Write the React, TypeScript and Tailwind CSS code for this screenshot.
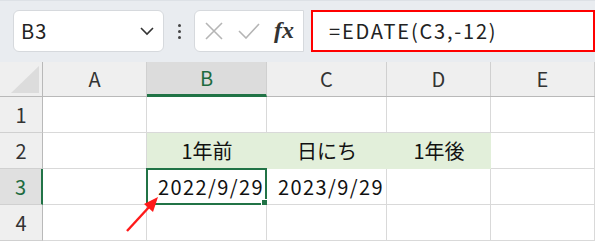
const cols = [
  { id: 'A', w: 'w-[104px]' },
  { id: 'B', w: 'w-[120px]' },
  { id: 'C', w: 'w-[120px]' },
  { id: 'D', w: 'w-[104px]' },
  { id: 'E', w: 'w-[104px]' },
];

const rows: { n: number; cells: string[]; fill?: boolean }[] = [
  { n: 1, cells: ['', '', '', '', ''] },
  { n: 2, cells: ['', '1年前', '日にち', '1年後', ''], fill: true },
  { n: 3, cells: ['', '2022/9/29', '2023/9/29', '', ''] },
  { n: 4, cells: ['', '', '', '', ''] },
];

export default function App() {
  return (
    <div
      className="w-[595px] h-[242px] bg-white overflow-hidden relative text-[#222]"
      style={{ fontFamily: '"Noto Sans CJK JP", "Noto Sans", sans-serif' }}
    >
      {/* 수식 입력줄 */}
      <div className="h-[62px] bg-[#e9ecf0] border-t border-[#dde1e6] flex items-start pt-[9px] pl-[13px]">
        <div className="w-[151px] h-[42px] bg-white border border-[#d6d9dd] rounded-[6px] flex items-center pl-[7px] pr-[8px]">
          <span className="text-[20px] leading-none flex-1 tracking-[1px]">B3</span>
          <svg width="16" height="10" viewBox="0 0 16 10" fill="none" stroke="#333" strokeWidth="1.6">
            <path d="M2 2 L8 8 L14 2" />
          </svg>
        </div>
        <div className="w-[30px] h-[42px] flex flex-col items-center justify-center gap-[3px]">
          <span className="w-[3px] h-[3px] bg-[#444] rounded-full" />
          <span className="w-[3px] h-[3px] bg-[#444] rounded-full" />
          <span className="w-[3px] h-[3px] bg-[#444] rounded-full" />
        </div>
        <div className="w-[110px] h-[42px] bg-white border border-[#d6d9dd] rounded-l-[6px] flex items-center pl-[9px] gap-[14px]">
          <svg width="20" height="20" viewBox="0 0 20 20" fill="none" stroke="#b5b5b5" strokeWidth="1.6">
            <path d="M2 2 L18 18 M18 2 L2 18" />
          </svg>
          <svg width="22" height="16" viewBox="0 0 22 16" fill="none" stroke="#b5b5b5" strokeWidth="1.6">
            <path d="M1 8 L8 15 L21 1" />
          </svg>
          <span
            className="text-[24px] italic font-bold text-[#333] leading-none -mt-[2px]"
            style={{ fontFamily: '"Liberation Serif", serif' }}
          >
            fx
          </span>
        </div>
        <div className="ml-[7px] w-[284px] h-[42px] bg-white border-2 border-[#ff0000] flex items-center pl-[16px]">
          <span className="text-[20px] leading-none tracking-[1.8px]">=EDATE(C3,-12)</span>
        </div>
      </div>

      {/* 시트 */}
      <div className="flex flex-col">
        <div className="flex h-[35px] bg-[#efefef] border-b border-[#b9b9b9]">
          <div className="w-[43px] border-r border-[#b9b9b9] flex items-end justify-end pr-[3px] pb-[3px]">
            <svg width="28" height="27" viewBox="0 0 28 27">
              <polygon points="28,0 28,27 0,27" fill="#dcdcdc" />
            </svg>
          </div>
          {cols.map((c) =>
            c.id === 'B' ? (
              <div
                key={c.id}
                className={`${c.w} bg-[#dcdcdc] border-r border-[#d0d0d0] border-b-[3px] border-b-[#217346] -mb-px flex items-center justify-center text-[20px] text-[#1e6b3f]`}
              >
                {c.id}
              </div>
            ) : (
              <div
                key={c.id}
                className={`${c.w} border-r border-[#d0d0d0] flex items-center justify-center text-[20px] text-[#333]`}
              >
                {c.id}
              </div>
            )
          )}
        </div>
        {rows.map((r) => (
          <div key={r.n} className="flex h-[36px]">
            {r.n === 3 ? (
              <div className="w-[43px] bg-[#e0e0e0] border-r-2 border-[#217346] border-b border-b-[#d0d0d0] flex items-center justify-center text-[20px] text-[#1e6b3f]">
                {r.n}
              </div>
            ) : (
              <div className="w-[43px] bg-[#efefef] border-r border-[#b9b9b9] border-b border-b-[#d0d0d0] flex items-center justify-center text-[20px] text-[#333]">
                {r.n}
              </div>
            )}
            {cols.map((c, i) => {
              const green = r.fill && i >= 1 && i <= 3;
              const sel = r.n === 3 && c.id === 'B';
              const val = r.cells[i];
              const isDate = r.n === 3;
              return (
                <div
                  key={c.id}
                  className={`${c.w} relative flex items-center text-[20px] text-[#111] ${
                    green ? 'bg-[#e2efda] justify-center' : 'bg-white border-r border-b border-[#d9d9d9]'
                  } ${isDate ? 'justify-end pr-[2px] tracking-[1.4px]' : ''}`}
                >
                  {val}
                  {sel && (
                    <>
                      <span className="absolute -left-px -top-px -right-px -bottom-px border-2 border-[#217346]" />
                      <span className="absolute -right-[3px] -bottom-[3px] w-[6px] h-[6px] bg-[#217346] border border-white box-content" />
                    </>
                  )}
                </div>
              );
            })}
          </div>
        ))}
      </div>

      {/* 빨간 화살표 */}
      <svg className="absolute left-0 top-0 pointer-events-none" width="595" height="242">
        <line x1="127" y1="231" x2="150" y2="206" stroke="#ff1a1a" strokeWidth="2.4" />
        <polygon points="158,197 144,204 153,212" fill="#ff1a1a" />
      </svg>
    </div>
  );
}
